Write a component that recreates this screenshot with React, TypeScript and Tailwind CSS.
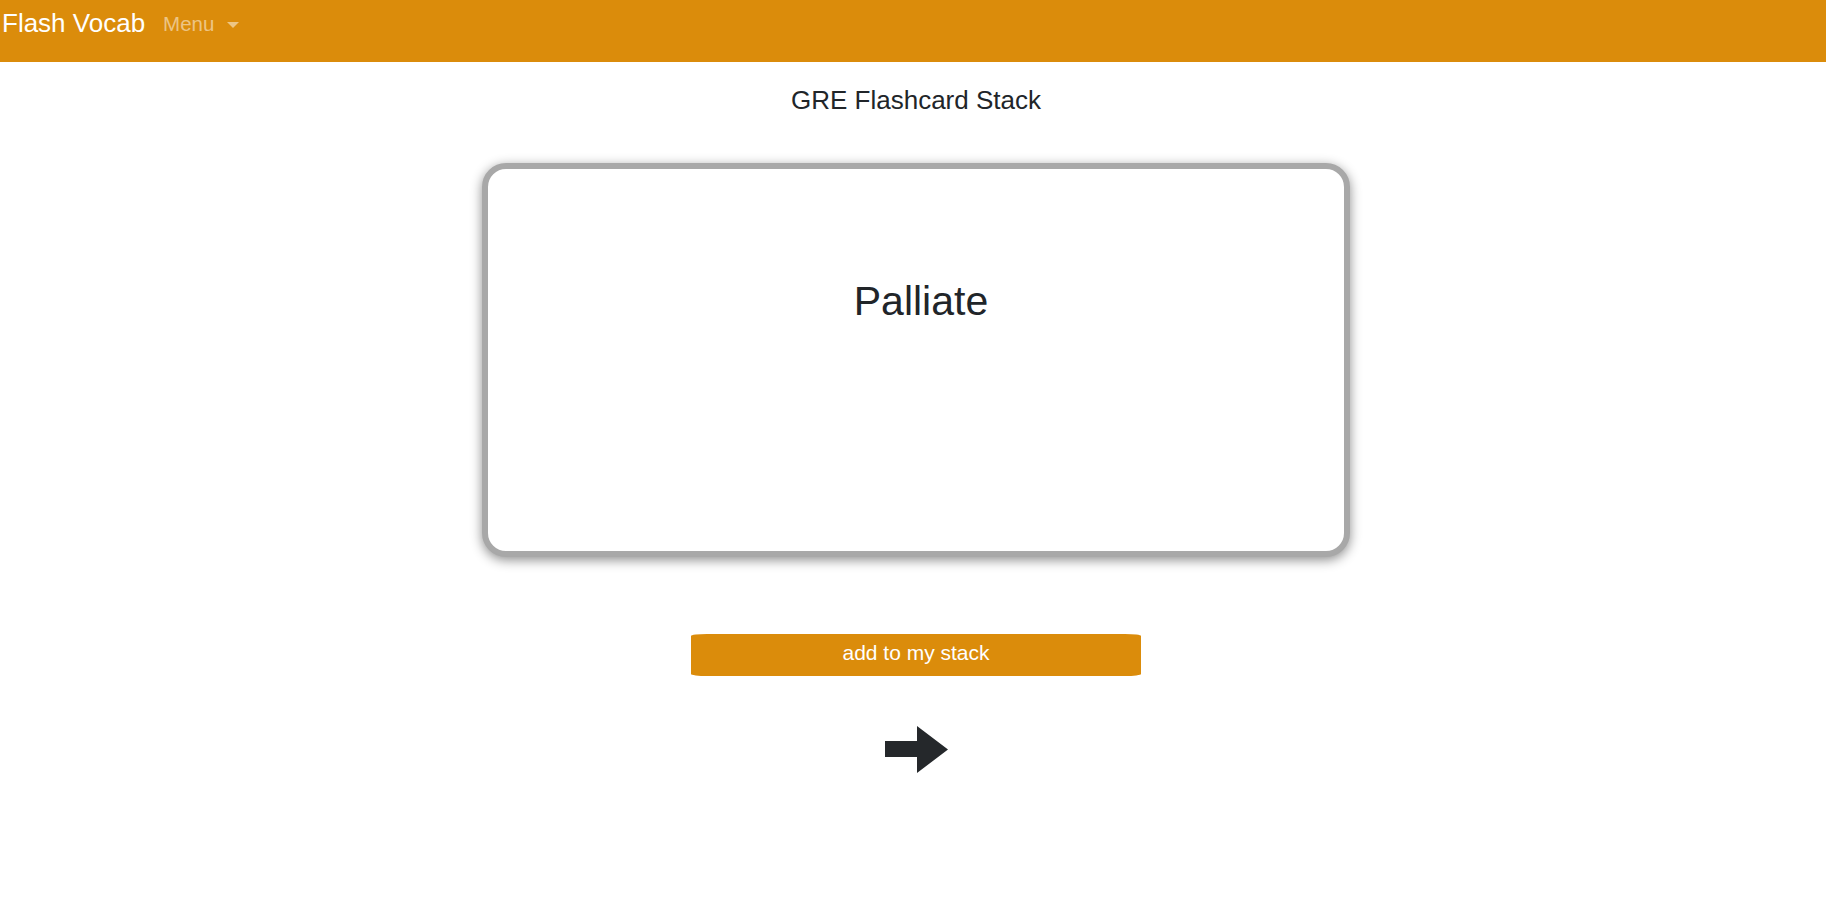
export default function App() {
  return (
    <div className="min-h-[909px] bg-white font-['Liberation_Sans',Arial,sans-serif] text-[#212529]">
      {/* Navbar */}
      <nav className="flex h-[62px] items-start bg-[#db8c0b] pl-[2px]">
        <a href="#" className="mt-[4px] text-[26px] leading-[38px] text-white">
          Flash Vocab
        </a>
        <button className="ml-[18px] mt-[9px] flex items-center text-[20.5px] leading-[30px] text-white/50">
          Menu
          <span className="ml-[13px] mt-[1px] h-0 w-0 border-x-[6px] border-t-[6px] border-x-transparent border-t-white/50" />
        </button>
      </nav>

      {/* Main */}
      <main className="flex flex-col items-center pl-[6px]">
        <h1 className="mt-[23px] text-[26px] leading-[1.2]">GRE Flashcard Stack</h1>

        {/* Card */}
        <div className="mt-[47px] flex h-[394px] w-[868px] justify-center rounded-[24px] border-[6px] border-[#a8a8a8] bg-white pl-[10px] pt-[108px] shadow-[0_3px_12px_rgba(0,0,0,0.45)]">
          <h2 className="text-[41px] leading-[1.2]">Palliate</h2>
        </div>

        {/* Add button */}
        <button className="mt-[77px] h-[42px] w-[450px] rounded-[16px/2px] bg-[#db8c0b] pb-[5px] text-[21px] leading-[30px] text-white">
          add to my stack
        </button>

        {/* Next arrow */}
        <button className="mt-[50px]" aria-label="next">
          <svg width="63" height="47" viewBox="0 0 63 47" className="block">
            <polygon points="0,15 32,15 32,0 63,23.5 32,47 32,31 0,31" fill="#25282b" />
          </svg>
        </button>
      </main>
    </div>
  )
}
